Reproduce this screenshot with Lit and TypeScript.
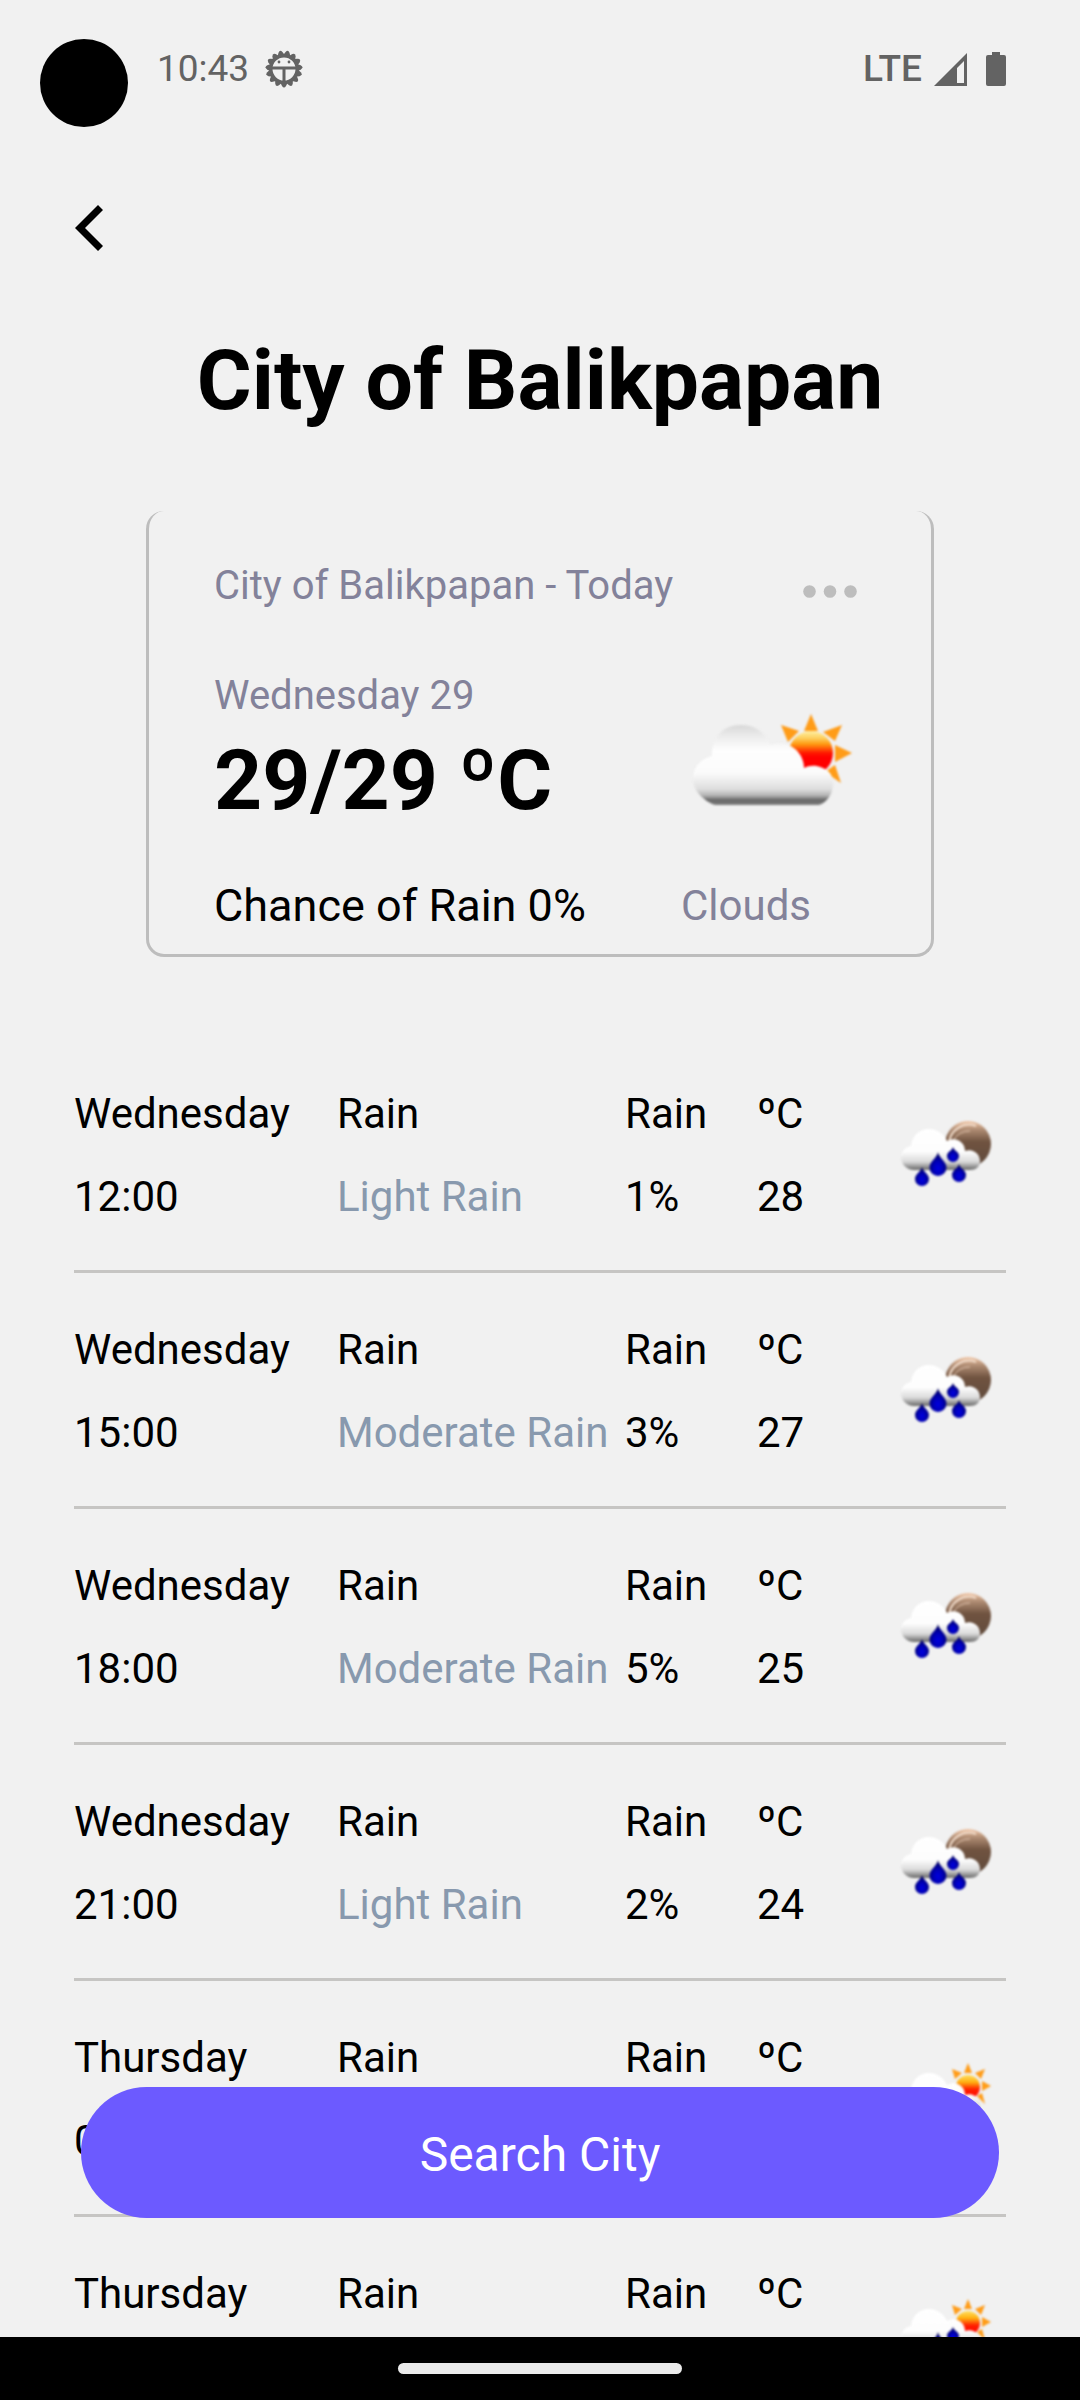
import { LitElement, html, css, svg } from "lit";
import { customElement, property } from "lit/decorators.js";

type IconKind = "sun-cloud" | "moon-rain" | "sun-rain";

interface Slot {
  day: string;
  time: string;
  sky: string;
  detail: string;
  chance: string;
  degrees: string;
  icon: IconKind;
}

const slots: Slot[] = [
  { day: "Wednesday", time: "12:00", sky: "Rain", detail: "Light Rain", chance: "1%", degrees: "28", icon: "moon-rain" },
  { day: "Wednesday", time: "15:00", sky: "Rain", detail: "Moderate Rain", chance: "3%", degrees: "27", icon: "moon-rain" },
  { day: "Wednesday", time: "18:00", sky: "Rain", detail: "Moderate Rain", chance: "5%", degrees: "25", icon: "moon-rain" },
  { day: "Wednesday", time: "21:00", sky: "Rain", detail: "Light Rain", chance: "2%", degrees: "24", icon: "moon-rain" },
  { day: "Thursday", time: "00:00", sky: "Rain", detail: "Light Rain", chance: "2%", degrees: "25", icon: "sun-rain" },
  { day: "Thursday", time: "03:00", sky: "Rain", detail: "Light Rain", chance: "2%", degrees: "27", icon: "sun-rain" },
];

const rainCloud = "M33 69 C25 68 21 62 21 56 C21 50 26 46 31 45 C32 35 39 28 49 28 C58 28 64 34 67 40 C76 35 85 41 85 50 C93 47 100 53 100 60 C100 66 96 69 90 69 Z";

const drop = (x: number, y: number, w: number, h: number) => {
  const r = w / 2;
  const cy = y + h - r;
  return svg`<path fill="url(#drop)" d="M${x} ${y} C${x + 1} ${y + h * 0.25} ${x + r} ${cy - r * 0.7} ${x + r} ${cy} A${r} ${r} 0 0 1 ${x - r} ${cy} C${x - r} ${cy - r * 0.7} ${x - 1} ${y + h * 0.25} ${x} ${y}Z"/>`;
};

@customElement("weather-icon")
export class WeatherIcon extends LitElement {
  @property() kind: IconKind = "moon-rain";

  static styles = css`
    :host { display: block; }
    .picture { display: block; filter: blur(1px); }
  `;

  private sunCloud() {
    return html`
      <svg class="picture" width="180" height="120" viewBox="0 0 180 120" role="img" aria-label="Partly cloudy">
        <defs>
          <linearGradient id="sun" x1="0" y1="0" x2="0" y2="1">
            <stop offset="0" stop-color="#fff0a0"/>
            <stop offset="0.16" stop-color="#fdd060"/>
            <stop offset="0.3" stop-color="#ff9a10"/>
            <stop offset="0.5" stop-color="#ff1800"/>
            <stop offset="0.6" stop-color="#f00"/>
          </linearGradient>
          <linearGradient id="cloud" gradientUnits="userSpaceOnUse" x1="0" y1="24" x2="0" y2="104">
            <stop offset="0" stop-color="#d8d8d8"/>
            <stop offset="0.14" stop-color="#ececec"/>
            <stop offset="0.32" stop-color="#fefefe"/>
            <stop offset="0.6" stop-color="#fbfbfb"/>
            <stop offset="0.8" stop-color="#dedede"/>
            <stop offset="0.88" stop-color="#b4b4b4"/>
            <stop offset="0.94" stop-color="#666"/>
            <stop offset="1" stop-color="#808080"/>
          </linearGradient>
        </defs>
        <g fill="#ff9c18">
          <path d="M130 13 L137 30 H123Z"/>
          <path d="M161 24 L154 40 L142 31Z"/>
          <path d="M171 52 L154 61 V44Z"/>
          <path d="M160 82 L144 71 L154 64Z"/>
          <path d="M100 24 L118 30 L107 41Z"/>
        </g>
        <circle cx="130" cy="52" r="22" fill="url(#sun)"/>
        <path fill="url(#cloud)" d="M34 104 C27 102 12 92 12 78 C12 66 20 58 31 55 C31 36 42 24 60 24 C75 24 84 32 89 44 C99 41 107 42 114 48 C120 53 123 60 123 67 C132 62 142 66 147 70 C151 74 153 79 152 85 C151 94 145 102 138 104 Z"/>
      </svg>`;
  }

  private rain(night: boolean) {
    const sky = night
      ? svg`
        <circle cx="88" cy="43" r="23" fill="url(#moon)"/>
        <path d="M69 42 A20 20 0 0 1 96 25" fill="none" stroke="#f1dccb" stroke-width="2"/>
        <path d="M73 40 A18 18 0 0 1 90 30" fill="none" stroke="#e0c3ad" stroke-width="1"/>`
      : svg`
        <g fill="#ff9c18">
          <path d="M88 18 L92 28 H84Z"/>
          <path d="M105 24 L101 34 L95 28Z"/>
          <path d="M111 41 L102 46 V36Z"/>
          <path d="M105 59 L97 51 L102 48Z"/>
          <path d="M72 24 L82 28 L75 34Z"/>
        </g>
        <circle cx="88" cy="42" r="12" fill="url(#sun)"/>`;
    return html`
      <svg class="picture" width="126" height="110" viewBox="0 0 126 110" role="img" aria-label="Rain">
        <defs>
          <linearGradient id="moon" x1="0" y1="0" x2="0" y2="1">
            <stop offset="0" stop-color="#f3c8a8"/>
            <stop offset="0.18" stop-color="#b08d74"/>
            <stop offset="0.45" stop-color="#705340"/>
            <stop offset="1" stop-color="#5f4a3c"/>
          </linearGradient>
          <linearGradient id="sun" x1="0" y1="0" x2="0" y2="1">
            <stop offset="0" stop-color="#ffe060"/>
            <stop offset="0.3" stop-color="#ffb010"/>
            <stop offset="0.6" stop-color="#ff2000"/>
            <stop offset="1" stop-color="#f00"/>
          </linearGradient>
          <linearGradient id="cloud" gradientUnits="userSpaceOnUse" x1="0" y1="28" x2="0" y2="69">
            <stop offset="0" stop-color="#fff"/>
            <stop offset="0.55" stop-color="#fdfdfd"/>
            <stop offset="0.8" stop-color="#dadada"/>
            <stop offset="0.94" stop-color="#8a8a8a"/>
            <stop offset="1" stop-color="#6a6a6a"/>
          </linearGradient>
          <radialGradient id="drop" cx="0.5" cy="0.68" r="0.6">
            <stop offset="0" stop-color="#0000e0"/>
            <stop offset="0.5" stop-color="#0000b4"/>
            <stop offset="1" stop-color="#00005a"/>
          </radialGradient>
        </defs>
        ${sky}
        <path fill="url(#cloud)" d=${rainCloud}/>
        ${drop(58, 51, 17, 24)} ${drop(73, 46, 12, 15)} ${drop(42, 66, 14, 19)} ${drop(79, 63, 14, 18)}
      </svg>`;
  }

  render() {
    return this.kind === "sun-cloud" ? this.sunCloud() : this.rain(this.kind === "moon-rain");
  }
}

@customElement("status-bar")
export class StatusBar extends LitElement {
  static styles = css`
    :host {
      position: relative;
      display: flex;
      align-items: center;
      justify-content: space-between;
      height: 138px;
      padding: 0 74px 0 157px;
      color: #636363;
      font-size: 37px;
      line-height: 48px;
    }
    .camera {
      position: absolute;
      left: 40px;
      top: 39px;
      width: 88px;
      height: 88px;
      border-radius: 50%;
      background: #000;
    }
    .group { display: flex; align-items: center; }
    .left { gap: 16px; }
    .right { gap: 12px; }
    .network { font-weight: 500; }
    .battery { margin-left: 7px; }
    svg { display: block; }
  `;

  render() {
    const teeth = Array.from({ length: 15 }, (_, i) => i * 24);
    return html`
      <div class="camera"></div>
      <div class="group left">
        <span>10:43</span>
        <svg width="38" height="38" viewBox="-19 -19 38 38" aria-hidden="true">
          <g fill="#636363">
            ${teeth.map((a) => svg`<path transform="rotate(${a})" d="M-4 13 L-2 17 Q0 20 2 17 L4 13Z"/>`)}
          </g>
          <circle r="13" fill="none" stroke="#636363" stroke-width="3"/>
          <path d="M-13 -1 H13 M0 -1 V13" stroke="#636363" stroke-width="3"/>
          <circle cx="-5" cy="-7" r="1.4" fill="#636363"/>
          <circle cx="5" cy="-7" r="1.4" fill="#636363"/>
        </svg>
      </div>
      <div class="group right">
        <span class="network">LTE</span>
        <svg width="33" height="33" viewBox="0 0 33 33" aria-hidden="true">
          <path fill="#636363" fill-rule="evenodd" d="M33 0 V33 H0Z M30 8 L23 15 V30 H30Z"/>
        </svg>
        <svg class="battery" width="20" height="34" viewBox="0 0 20 34" aria-hidden="true">
          <path fill="#636363" d="M6 0 H14 V3 H18 Q20 3 20 5 V32 Q20 34 18 34 H2 Q0 34 0 32 V5 Q0 3 2 3 H6Z"/>
        </svg>
      </div>`;
  }
}

@customElement("today-card")
export class TodayCard extends LitElement {
  static styles = css`
    :host {
      display: block;
      margin: 80px 146px 0;
      padding: 51px 70px 24px 65px;
      border: 3px solid #bdbdbd;
      border-top: 0;
      border-radius: 18px;
      color: #83829a;
      font-size: 40px;
      line-height: 48px;
    }
    .heading, .body, .foot { display: grid; grid-template-columns: minmax(0, 1fr) 180px; }
    .heading { grid-template-columns: minmax(0, 1fr) auto; }
    .place, .date, .temperature, .chance, .summary { margin: 0; }
    .place { font-size: 40px; font-weight: 400; }
    .more {
      display: flex;
      align-items: center;
      padding: 10px 4px 0 0;
      border: 0;
      background: none;
    }
    .body { margin-top: 62px; align-items: end; }
    .temperature {
      margin-top: 11px;
      color: #000;
      font-size: 84px;
      font-weight: 700;
      line-height: 100px;
    }
    .icon { padding-bottom: 10px; }
    .foot { margin-top: 51px; align-items: end; }
    .chance { color: #000; font-size: 45px; }
    .summary { font-size: 42px; }
  `;

  render() {
    return html`
      <div class="heading">
        <h2 class="place">City of Balikpapan - Today</h2>
        <button class="more" aria-label="More">
          <svg width="54" height="13" viewBox="0 0 54 13" fill="#bdbdbd" aria-hidden="true">
            <circle cx="6.5" cy="6.5" r="6.3"/><circle cx="27" cy="6.5" r="6.3"/><circle cx="47.5" cy="6.5" r="6.3"/>
          </svg>
        </button>
      </div>
      <div class="body">
        <div>
          <p class="date">Wednesday 29</p>
          <p class="temperature">29/29 ºC</p>
        </div>
        <weather-icon class="icon" kind="sun-cloud"></weather-icon>
      </div>
      <div class="foot">
        <p class="chance">Chance of Rain 0%</p>
        <p class="summary">Clouds</p>
      </div>`;
  }
}

@customElement("forecast-list")
export class ForecastList extends LitElement {
  static styles = css`
    :host { display: block; margin: 80px 74px 0; }
    .rows { margin: 0; padding: 0; list-style: none; }
    .row {
      display: grid;
      grid-template-columns: 263fr 288fr 132fr 123fr 126px;
      align-items: center;
      padding: 53px 0 49px;
      border-bottom: 3px solid #c6c5c3;
      color: #000;
      font-size: 42px;
      line-height: 48px;
    }
    .cell { display: grid; gap: 35px; min-width: 0; white-space: nowrap; }
    .detail { color: #8899ae; }
  `;

  render() {
    return html`
      <ul class="rows">
        ${slots.map((s) => html`
          <li class="row">
            <div class="cell"><span>${s.day}</span><span>${s.time}</span></div>
            <div class="cell"><span>${s.sky}</span><span class="detail">${s.detail}</span></div>
            <div class="cell"><span>Rain</span><span>${s.chance}</span></div>
            <div class="cell"><span>ºC</span><span>${s.degrees}</span></div>
            <weather-icon .kind=${s.icon}></weather-icon>
          </li>`)}
      </ul>`;
  }
}

@customElement("app-root")
export class AppRoot extends LitElement {
  static styles = css`
    :host {
      position: relative;
      display: flex;
      flex-direction: column;
      height: 100vh;
      background: #f1f1f1;
      color: #000;
      font-family: Roboto, "Liberation Sans", sans-serif;
    }
    .content {
      flex: 1;
      min-height: 0;
      overflow-y: auto;
      scrollbar-width: none;
    }
    .header { padding: 67px 74px 0; }
    .back { display: block; padding: 0; border: 0; background: none; }
    .back svg { display: block; }
    .title {
      margin: 80px 0 0;
      font-size: 84px;
      font-weight: 700;
      line-height: 100px;
      text-align: center;
    }
    .search {
      position: absolute;
      left: 81px;
      right: 81px;
      bottom: 182px;
      height: 131px;
      padding: 4px 0 0;
      border: 0;
      border-radius: 66px;
      background: #6c5aff;
      color: #fff;
      font: 400 48px/56px Roboto, "Liberation Sans", sans-serif;
    }
    .navigation {
      display: flex;
      flex: none;
      align-items: center;
      justify-content: center;
      height: 63px;
      background: #000;
    }
    .handle { width: 284px; height: 11px; border-radius: 6px; background: #ebebeb; }
  `;

  render() {
    return html`
      <status-bar></status-bar>
      <main class="content">
        <header class="header">
          <button class="back" aria-label="Back">
            <svg width="30" height="46" viewBox="0 0 30 46" aria-hidden="true">
              <path fill="#000" d="M24 0 L29 5 L11 23 L29 41 L24 46 L1 23Z"/>
            </svg>
          </button>
          <h1 class="title">City of Balikpapan</h1>
        </header>
        <today-card></today-card>
        <forecast-list></forecast-list>
      </main>
      <button class="search">Search City</button>
      <footer class="navigation"><div class="handle"></div></footer>`;
  }
}
